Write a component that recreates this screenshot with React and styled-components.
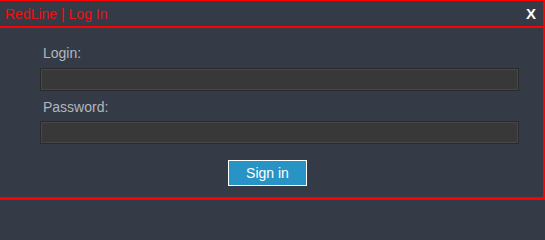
import React from 'react';
import styled, { createGlobalStyle } from 'styled-components';

const GlobalStyle = createGlobalStyle`
  html, body {
    margin: 0;
    padding: 0;
    background: #353a47;
  }
  * {
    box-sizing: border-box;
  }
`;

const Dialog = styled.div`
  width: 545px;
  height: 200px;
  display: flex;
  flex-direction: column;
  background: #353a47;
  border-top: 1px solid #ff0000;
  border-right: 2px solid #ff0000;
  border-bottom: 3px solid #ff0000;
  font-family: "Liberation Sans", Arial, sans-serif;
`;

const TitleBar = styled.div`
  height: 27px;
  display: flex;
  align-items: center;
  justify-content: space-between;
  padding: 0 7px 0 5px;
  border-bottom: 2px solid #ff0000;
`;

const Title = styled.span`
  color: #ee1111;
  font-size: 14px;
`;

const CloseButton = styled.button`
  background: none;
  border: none;
  padding: 0;
  color: #ffffff;
  font-family: "Liberation Sans", Arial, sans-serif;
  font-weight: bold;
  font-size: 15px;
  cursor: pointer;
`;

const Form = styled.form`
  flex: 1;
  display: flex;
  flex-direction: column;
  padding: 17px 24px 0 40px;
`;

const Label = styled.label`
  display: block;
  color: #b3b7be;
  font-size: 14px;
  line-height: 16px;
  padding-left: 3px;
  margin-bottom: ${p => p.$gap || 7}px;
`;

const Input = styled.input`
  display: block;
  width: 100%;
  height: 23px;
  margin: 0 0 ${p => p.$after || 0}px;
  background: #383838;
  border: 1px solid #2a2a2a;
  box-shadow: inset 0 0 0 1px #474747;
  color: #dddddd;
  font-family: inherit;
  font-size: 13px;
  padding: 0 4px;
  outline: none;
`;

const Actions = styled.div`
  display: flex;
  padding-left: 188px;
  margin-top: 16px;
`;

const SignIn = styled.button`
  width: 79px;
  height: 26px;
  background: #2893c5;
  border: 1px solid #ffffff;
  color: #ffffff;
  font-family: "Liberation Sans", Arial, sans-serif;
  font-size: 14px;
  padding: 0;
  cursor: pointer;
`;

export default function App() {
  return (
    <>
      <GlobalStyle />
      <Dialog>
        <TitleBar>
          <Title>RedLine | Log In</Title>
          <CloseButton type="button">X</CloseButton>
        </TitleBar>
        <Form onSubmit={e => e.preventDefault()}>
          <Label htmlFor="login">Login:</Label>
          <Input id="login" type="text" $after={8} />
          <Label htmlFor="password" $gap={6}>Password:</Label>
          <Input id="password" type="password" />
          <Actions>
            <SignIn type="submit">Sign in</SignIn>
          </Actions>
        </Form>
      </Dialog>
    </>
  );
}
